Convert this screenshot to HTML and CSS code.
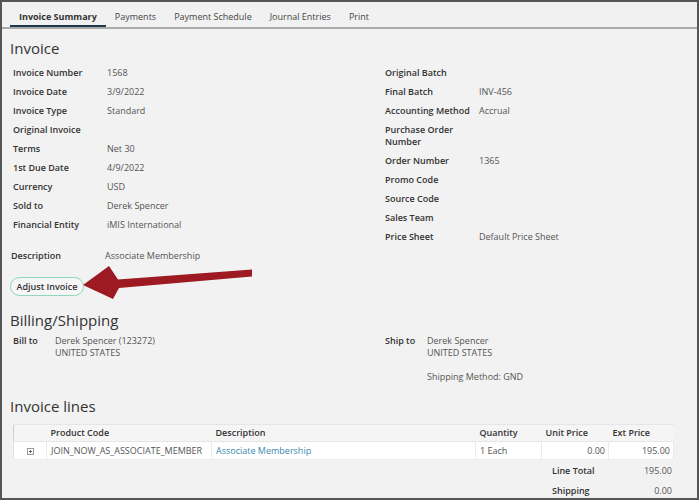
FILE: index.html
```html
<!DOCTYPE html>
<html lang="en">
<head>
<meta charset="utf-8">
<title>Invoice Summary</title>
<link rel="stylesheet" href="styles.css">
</head>
<body>
<div class="page">
  <div class="frame">
    <nav class="tabs">
      <span class="tab active">Invoice Summary</span>
      <span class="tab">Payments</span>
      <span class="tab">Payment Schedule</span>
      <span class="tab">Journal Entries</span>
      <span class="tab">Print</span>
    </nav>
    <main class="content">
      <h2 class="section-title first">Invoice</h2>
      <div class="fields">
        <dl class="field-list">
          <div class="field"><dt>Invoice Number</dt><dd>1568</dd></div>
          <div class="field"><dt>Invoice Date</dt><dd>3/9/2022</dd></div>
          <div class="field"><dt>Invoice Type</dt><dd>Standard</dd></div>
          <div class="field"><dt>Original Invoice</dt><dd></dd></div>
          <div class="field"><dt>Terms</dt><dd>Net 30</dd></div>
          <div class="field"><dt>1st Due Date</dt><dd>4/9/2022</dd></div>
          <div class="field"><dt>Currency</dt><dd>USD</dd></div>
          <div class="field"><dt>Sold to</dt><dd>Derek Spencer</dd></div>
          <div class="field"><dt>Financial Entity</dt><dd>iMIS International</dd></div>
        </dl>
        <dl class="field-list">
          <div class="field"><dt>Original Batch</dt><dd></dd></div>
          <div class="field"><dt>Final Batch</dt><dd>INV-456</dd></div>
          <div class="field"><dt>Accounting Method</dt><dd>Accrual</dd></div>
          <div class="field"><dt class="wrap">Purchase Order Number</dt><dd></dd></div>
          <div class="field"><dt>Order Number</dt><dd>1365</dd></div>
          <div class="field"><dt>Promo Code</dt><dd></dd></div>
          <div class="field"><dt>Source Code</dt><dd></dd></div>
          <div class="field"><dt>Sales Team</dt><dd></dd></div>
          <div class="field"><dt>Price Sheet</dt><dd>Default Price Sheet</dd></div>
        </dl>
      </div>
      <dl class="field desc"><dt>Description</dt><dd>Associate Membership</dd></dl>
      <button class="btn-adjust" type="button">Adjust Invoice</button>

      <h2 class="section-title billing">Billing/Shipping</h2>
      <div class="address-grid">
        <dl class="addr"><dt>Bill to</dt><dd>Derek Spencer (123272)<br>UNITED STATES</dd></dl>
        <dl class="addr"><dt>Ship to</dt><dd>Derek Spencer<br>UNITED STATES<br><br>Shipping Method: GND</dd></dl>
      </div>

      <h2 class="section-title lines-title">Invoice lines</h2>
      <div class="lines-wrap">
        <table class="lines">
          <colgroup>
            <col class="c-exp"><col class="c-code"><col class="c-desc"><col class="c-qty"><col class="c-unit"><col class="c-ext">
          </colgroup>
          <thead>
            <tr><th></th><th>Product Code</th><th>Description</th><th>Quantity</th><th>Unit Price</th><th>Ext Price</th></tr>
          </thead>
          <tbody>
            <tr>
              <td class="exp"><span class="plus-box"></span></td>
              <td>JOIN_NOW_AS_ASSOCIATE_MEMBER</td>
              <td><a class="link" href="#">Associate Membership</a></td>
              <td>1 Each</td>
              <td class="num">0.00</td>
              <td class="num">195.00</td>
            </tr>
          </tbody>
        </table>
        <table class="totals">
          <tr><th>Line Total</th><td>195.00</td></tr>
          <tr><th>Shipping</th><td>0.00</td></tr>
        </table>
      </div>
    </main>
  </div>
  <svg class="arrow" width="699" height="500" viewBox="0 0 699 500" aria-hidden="true">
    <polygon points="83,285 109,266 118,279.5 252,269.5 252,276.5 119,288 113,299" fill="#9d1a22"/>
  </svg>
</div>
</body>
</html>
```

FILE: styles.css
```css
* { box-sizing: border-box; }
html, body { margin: 0; padding: 0; }
body {
  font-family: "Open Sans", "Liberation Sans", sans-serif;
  font-size: 9px;
  color: #555;
  background: #f2f2f2;
}
.page { position: relative; width: 699px; height: 500px; }
.frame {
  width: 699px;
  height: 500px;
  border: 2px solid #555;
  background: #f2f2f2;
  overflow: hidden;
}
.tabs {
  display: flex;
  padding-left: 8px;
  border-bottom: 2px solid #ababab;
  height: 27px;
  background: #f1f1f1;
}
.tab {
  height: 25px;
  padding: 9px 9px 0;
  line-height: 12px;
  font-size: 9px;
  color: #444;
  border-bottom: 2px solid transparent;
}
.tab.active { font-weight: 700; color: #333; border-bottom-color: #1c3a4a; }

.content { padding: 0 8px; }
.section-title {
  margin: 0;
  font-size: 15px;
  font-weight: 400;
  line-height: 20px;
  color: #333;
}
.section-title.first { margin-top: 9px; margin-bottom: 5px; }
.section-title.billing { margin-top: 14px; margin-bottom: 5px; }
.section-title.lines-title { margin-top: 13px; margin-bottom: 8px; }

dl, dd { margin: 0; }
.fields { display: grid; grid-template-columns: 372px 1fr; }
.field-list { padding-left: 3px; }
.field {
  display: grid;
  grid-template-columns: 94px 1fr;
  padding: 3.5px 0;
  line-height: 12px;
}
.field dt, .addr dt, .desc dt { font-weight: 600; color: #333; white-space: nowrap; }
.field dt.wrap { white-space: normal; padding-right: 20px; }
.desc { padding-left: 1px; margin: 0; }

.btn-adjust {
  display: block;
  margin-top: 12px;
  height: 19px;
  width: 74px;
  padding: 0;
  border: 1.5px solid #8fd8ba;
  border-radius: 10px;
  background: #f6f6f6;
  font-family: inherit;
  font-size: 9px;
  font-weight: 600;
  color: #333;
}

.address-grid { display: grid; grid-template-columns: 372px 1fr; }
.addr {
  display: grid;
  grid-template-columns: 42px 1fr;
  padding-left: 3px;
  line-height: 12px;
}

.lines-wrap { margin-left: 3px; width: 660px; }
.lines {
  width: 660px;
  border-collapse: collapse;
  table-layout: fixed;
  line-height: 12px;
}
.c-exp { width: 33px; }
.c-code { width: 165px; }
.c-desc { width: 264px; }
.c-qty { width: 66px; }
.c-unit { width: 67px; }
.c-ext { width: 65px; }
.lines th {
  height: 17px;
  text-align: left;
  font-weight: 600;
  color: #333;
  background: #f5f5f5;
  padding: 0 4px;
  border-top: 1px solid #e6e6e6;
  border-bottom: 1px solid #e6e6e6;
}
.lines th:first-child { border-left: 1px solid #cfcfcf; }
.lines td {
  height: 18px;
  background: #fff;
  padding: 0 4px;
  border: 1px solid #ebebeb;
  white-space: nowrap;
}
.lines td.num { text-align: right; padding-right: 3px; }
.lines td.exp { text-align: center; border-left-color: #e0e0e0; }
.plus-box {
  display: inline-block;
  position: relative;
  width: 7px;
  height: 7px;
  border: 1px solid #999;
  vertical-align: middle;
}
.plus-box::before, .plus-box::after {
  content: "";
  position: absolute;
  background: #666;
}
.plus-box::before { left: 1px; right: 1px; top: 2px; height: 1px; }
.plus-box::after { top: 1px; bottom: 1px; left: 2px; width: 1px; }
.link { color: #3b8bb0; text-decoration: none; }

.totals {
  margin-left: auto;
  margin-top: 1px;
  width: 121px;
  border-collapse: collapse;
}
.totals th, .totals td { height: 20px; padding: 0; line-height: 12px; }
.totals th { text-align: left; font-weight: 600; color: #333; }
.totals td { text-align: right; padding-right: 1px; }

.arrow { position: absolute; left: 0; top: 0; pointer-events: none; }
```
